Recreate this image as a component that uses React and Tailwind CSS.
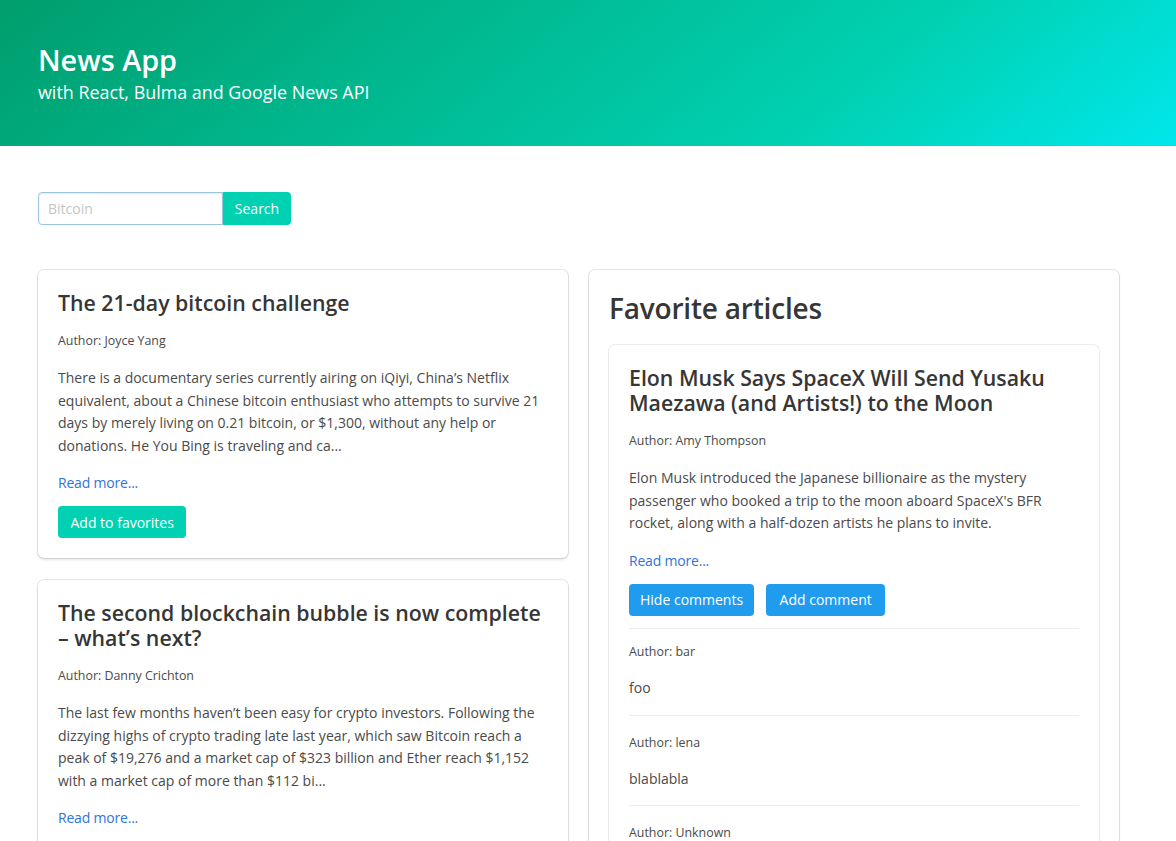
import React from 'react';

// lines are kept as in the reference so the wrapping matches
const articles = [
  {
    title: ['The 21-day bitcoin challenge'],
    author: 'Joyce Yang',
    lines: [
      'There is a documentary series currently airing on iQiyi, China’s Netflix',
      'equivalent, about a Chinese bitcoin enthusiast who attempts to survive 21',
      'days by merely living on 0.21 bitcoin, or $1,300, without any help or',
      'donations. He You Bing is traveling and ca...',
    ],
  },
  {
    title: ['The second blockchain bubble is now complete', '– what’s next?'],
    author: 'Danny Crichton',
    lines: [
      'The last few months haven’t been easy for crypto investors. Following the',
      'dizzying highs of crypto trading late last year, which saw Bitcoin reach a',
      'peak of $19,276 and a market cap of $323 billion and Ether reach $1,152',
      'with a market cap of more than $112 bi...',
    ],
  },
];

const favorite = {
  title: ['Elon Musk Says SpaceX Will Send Yusaku', 'Maezawa (and Artists!) to the Moon'],
  author: 'Amy Thompson',
  lines: [
    'Elon Musk introduced the Japanese billionaire as the mystery',
    "passenger who booked a trip to the moon aboard SpaceX's BFR",
    'rocket, along with a half-dozen artists he plans to invite.',
  ],
};

const comments = [
  { author: 'bar', text: 'foo' },
  { author: 'lena', text: 'blablabla' },
  { author: 'Unknown', text: '' },
];

const boxShadow = 'shadow-[0_2px_3px_rgba(10,10,10,0.1),0_0_0_1px_rgba(10,10,10,0.1)]';

function ArticleBody({ article }) {
  return (
    <>
      <h3 className="text-[21.3px] leading-[25px] font-semibold text-[#363636]">
        {article.title.map((t) => (
          <span key={t} className="block whitespace-nowrap">{t}</span>
        ))}
      </h3>
      <p className="mt-[17px] text-[12.4px] leading-[18px] text-[#4a4a4a]">Author: {article.author}</p>
      <p className="mt-[17px] text-[14px] leading-[22.5px] text-[#4a4a4a]">
        {article.lines.map((l) => (
          <span key={l} className="block whitespace-nowrap">{l}</span>
        ))}
      </p>
      <a href="#" className="mt-[15px] block text-[14px] leading-[22px] tracking-[-0.2px] text-[#3273dc]">
        Read more...
      </a>
    </>
  );
}

function ArticleCard({ article }) {
  return (
    <div className={`rounded-[6px] bg-white p-5 ${boxShadow}`}>
      <ArticleBody article={article} />
      <button className="mt-3 h-8 rounded-[4px] bg-[#00d1b2] px-[12.5px] text-[14px] text-white">
        Add to favorites
      </button>
    </div>
  );
}

function Comment({ comment, first }) {
  return (
    <div className={`border-t border-[#ededed] ${first ? 'pt-[14px] pb-[16px]' : 'pt-[18px] pb-[15px]'}`}>
      <p className="text-[12.4px] leading-[18px] text-[#4a4a4a]">Author: {comment.author}</p>
      {comment.text && <p className="mt-[16px] text-[14px] leading-[22px] text-[#4a4a4a]">{comment.text}</p>}
    </div>
  );
}

export default function App() {
  return (
    <div className="min-h-screen bg-white font-['Open_Sans',sans-serif]">
      <section className="h-[146px] bg-[linear-gradient(141deg,#009e6c_0%,#00d1b2_71%,#00e7eb_100%)] pl-[38px] pt-[43px] text-white">
        <h1 className="text-[28.8px] leading-[34px] font-semibold">News App</h1>
        <h2 className="mt-[3px] text-[17.9px] leading-[24px]">with React, Bulma and Google News API</h2>
      </section>

      <div className="px-[38px]">
        <div className="mt-[46px] flex h-[33px]">
          <input
            type="text"
            placeholder="Bitcoin"
            className="w-[185px] rounded-l-[4px] border border-[#9ac6e0] px-[9px] text-[14px] text-[#363636] shadow-[inset_0_1px_2px_rgba(10,10,10,0.1)] outline-none placeholder:text-[#c4c4c4]"
          />
          <button className="w-[68px] rounded-r-[4px] bg-[#00d1b2] text-[14px] text-white">Search</button>
        </div>

        <div className="mt-[45px] flex items-start gap-[21px]">
          <div className="flex w-[530px] flex-col gap-[22px]">
            {articles.map((a) => (
              <ArticleCard key={a.author} article={a} />
            ))}
          </div>

          <div className={`w-[530px] rounded-[6px] bg-white p-5 ${boxShadow}`}>
            <h2 className="text-[28px] leading-[36px] font-semibold tracking-[-0.2px] text-[#363636]">Favorite articles</h2>
            <div className="mt-[19px] rounded-[6px] bg-white p-5 pb-2 shadow-[0_0_0_1px_rgba(10,10,10,0.08)]">
              <ArticleBody article={favorite} />
              <div className="mt-3 flex gap-3">
                <button className="h-8 rounded-[4px] bg-[#209cee] px-[11px] text-[14px] text-white">Hide comments</button>
                <button className="h-8 rounded-[4px] bg-[#209cee] px-[13.5px] text-[14px] text-white">Add comment</button>
              </div>
              <div className="mt-[12px]">
                {comments.map((c, i) => (
                  <Comment key={c.author} comment={c} first={i === 0} />
                ))}
              </div>
            </div>
          </div>
        </div>
      </div>
    </div>
  );
}
